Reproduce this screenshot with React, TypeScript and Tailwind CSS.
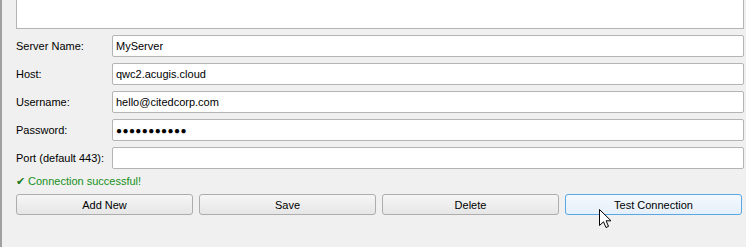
export default function App() {
  const fields = [
    { label: 'Server Name:', value: 'MyServer' },
    { label: 'Host:', value: 'qwc2.acugis.cloud' },
    { label: 'Username:', value: 'hello@citedcorp.com' },
    { label: 'Password:', value: '●●●●●●●●●●●', password: true },
    { label: 'Port (default 443):', value: '' },
  ];

  const buttons = ['Add New', 'Save', 'Delete', 'Test Connection'];

  return (
    <div
      className="relative w-[746px] h-[247px] overflow-hidden bg-[#f0f0f0] border-l-2 border-[#a0a0a0] text-[11px] text-black"
      style={{ fontFamily: '"Liberation Sans", Arial, sans-serif' }}
    >
      <div className="pl-[14px] w-[742px]">
        {/* list box (scrolled, top cut off) */}
        <div className="h-[29px] bg-white border border-t-0 border-[#b4b4b4]" />

        {/* Form rows */}
        <div className="mt-[6px] flex flex-col gap-[6px]">
          {fields.map((f) => (
            <div key={f.label} className="flex items-center h-[22px]">
              <div className="w-[96px] shrink-0 pt-px">{f.label}</div>
              <div className="flex-1 h-[22px] bg-white border border-[#b4b4b4] rounded-[2px] flex items-center pl-[3px] pt-px">
                {f.password ? (
                  <span className="text-[10px] tracking-[0.4px]">{f.value}</span>
                ) : (
                  f.value
                )}
              </div>
            </div>
          ))}
        </div>

        {/* Status */}
        <div className="h-[25px] flex items-center text-[#16911a]">
          <span className="mr-[3px] text-[#1b7a1b]">✔</span>
          Connection successful!
        </div>

        {/* Buttons */}
        <div className="flex gap-[6px]">
          {buttons.map((b, i) => (
            <div
              key={b}
              className={`w-[177px] h-[21px] flex items-center justify-center pt-px rounded-[3px] border ${
                i === 3
                  ? 'border-[#5aa7e6] bg-gradient-to-b from-[#f3f8fd] to-[#e6f0fa]'
                  : 'border-[#adadad] bg-gradient-to-b from-[#f6f6f6] to-[#e6e6e6]'
              }`}
            >
              {b}
            </div>
          ))}
        </div>
      </div>

      {/* mouse cursor */}
      <svg className="absolute left-[597px] top-[209px]" width="13" height="20" viewBox="0 0 13 20">
        <path
          d="M0.5 0.5 L0.5 16.5 L4.5 12.8 L7 18.5 L9.5 17.4 L7.1 11.8 L12 11.8 Z"
          fill="white"
          stroke="black"
          strokeWidth="1"
          strokeLinejoin="miter"
        />
      </svg>
    </div>
  );
}
